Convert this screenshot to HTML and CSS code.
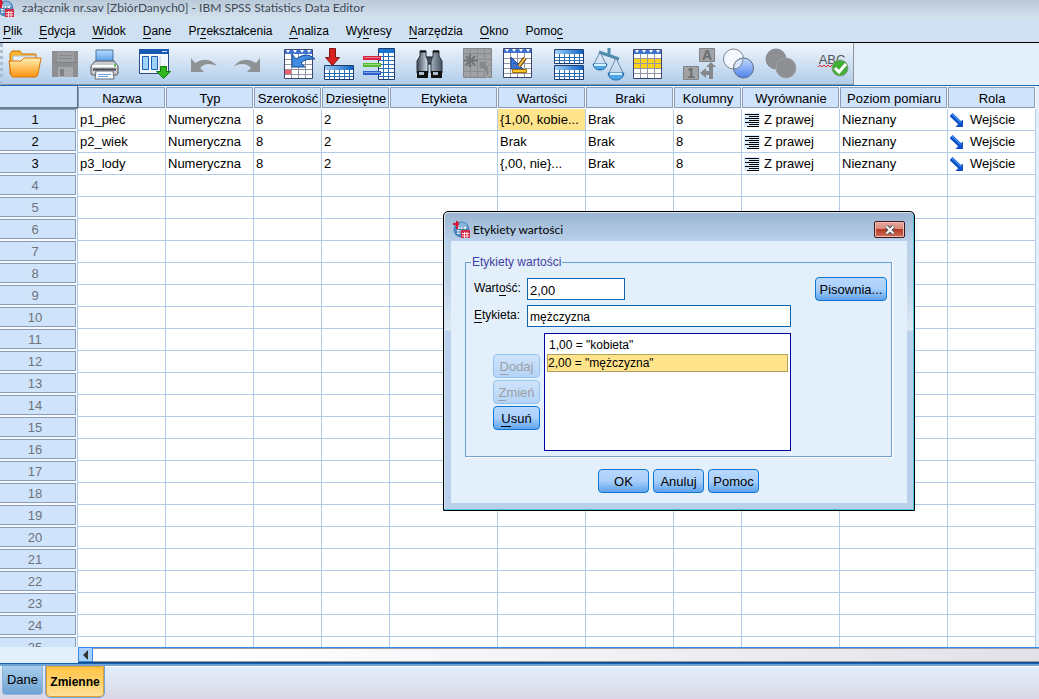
FILE: index.html
```html
<!DOCTYPE html>
<html lang="pl">
<head>
<meta charset="utf-8">
<title>załącznik nr.sav [ZbiórDanych0] - IBM SPSS Statistics Data Editor</title>
<link rel="stylesheet" href="styles.css">
</head>
<body>
<svg class="defs" aria-hidden="true">
  <defs>
    <linearGradient id="blueBar"><stop offset="0" stop-color="#9fd0f8"/><stop offset="1" stop-color="#0d62c4"/></linearGradient>
    <linearGradient id="folder" x2="0" y2="1"><stop offset="0" stop-color="#fff0b0"/><stop offset="1" stop-color="#ff9410"/></linearGradient>
    <linearGradient id="blueDown" x2="0" y2="1"><stop offset="0" stop-color="#b9dcff"/><stop offset="1" stop-color="#3f8fe0"/></linearGradient>
    <linearGradient id="metal"><stop offset="0" stop-color="#3d4650"/><stop offset=".4" stop-color="#c6d3e2"/><stop offset="1" stop-color="#46525f"/></linearGradient>
    <linearGradient id="ball" x2="0" y2="1"><stop offset="0" stop-color="#c4daff"/><stop offset="1" stop-color="#4d82e8"/></linearGradient>
    <symbol id="logo" viewBox="0 0 17 17">
      <circle cx="8.500" cy="8.500" r="8" fill="#4d87bd"/>
      <path d="M5 3Q9 0 13 3L15 7H5z" fill="#8bb7da"/>
      <path d="M4 6h9v7H4z" fill="#e8f1f8"/><path d="M4 8.500h9M4 11h9M7 6v7M10 6v7" stroke="#4f82ad"/>
      <path d="M0 3h6M4 0v8" stroke="#dc1434" stroke-width="2"/>
      <path d="M8 9h9v8H8z" fill="#d12c48"/><path d="M9 12.500h7M9 15h7M11.500 11v6M14 11v6" stroke="#ffdce0"/>
    </symbol>
    <symbol id="right" viewBox="0 0 16 14">
      <path d="M0 0h16v14H0z" fill="#dcebfa"/><path d="M1 1.500h14M5 3.500h10M1 5.500h14M5 7.500h10M1 9.500h14M5 11.500h10M3 13.500h12" stroke="#000"/>
    </symbol>
    <symbol id="role" viewBox="0 0 13 13">
      <path d="M1 1.500L10 10" stroke="#0b4fc9" stroke-width="4"/><path d="M12 6v7H5z" fill="#0b4fc9"/><path d="M2 1l8 8" stroke="#4ea0f5"/>
    </symbol>
  </defs>
</svg>

<div class="app">
  <header class="titlebar">
    <svg class="titlebar-icon" viewBox="3 0 14 17"><use href="#logo" width="17" height="17"/></svg>
    <h1>załącznik nr.sav [ZbiórDanych0] - IBM SPSS Statistics Data Editor</h1>
  </header>

  <nav class="menubar">
    <button><u>P</u>lik</button>
    <button><u>E</u>dycja</button>
    <button><u>W</u>idok</button>
    <button><u>D</u>ane</button>
    <button>Pr<u>z</u>ekształcenia</button>
    <button><u>A</u>naliza</button>
    <button>Wy<u>k</u>resy</button>
    <button><u>N</u>arzędzia</button>
    <button><u>O</u>kno</button>
    <button>Pomo<u>c</u></button>
  </nav>

  <div class="toolbar-row">
  <div class="toolbar">
    <div class="tool-group">
      <button aria-label="Otwórz"><svg viewBox="0 0 34 34"><path d="M2 27V7l2-3h8l2 3h14v20z" fill="#ffb52e" stroke="#c97206"/><path d="M5 9h22l2 9H5z" fill="#e6f1fb" stroke="#a8c0d6"/><path d="M1 14h12l3-3h17l-3 16q-.5 3-3 3H5q-2 0-2-3z" fill="url(#folder)" stroke="#d67508"/></svg></button>
      <button aria-label="Zapisz" disabled><svg viewBox="0 0 34 34"><path d="M4 4h26v26H4z" fill="#8d8f92"/><path d="M9 5h17v10H9z" fill="#9b9da0"/><path d="M11 8.500h13M11 11.500h13" stroke="#88898b"/><path d="M10 20h15v10H10z" fill="#a6a8aa"/><path d="M12 22h4v7h-4z" fill="#7f8183"/><path d="M5 15.500h24" stroke="#7d7f82"/></svg></button>
      <button aria-label="Drukuj"><svg viewBox="0 0 34 34"><path d="M8 3h17v14H8z" fill="url(#blueDown)" stroke="#49709b"/><path d="M7 14h19l4 5v7q0 2-2 2H5q-2 0-2-2v-7z" fill="#c9cbce" stroke="#55585c"/><path d="M4 19h25" stroke="#fff" stroke-width="2"/><path d="M5 22.500h23" stroke="#44474b" stroke-width="2"/><path d="M8 24h17l1 8H7z" fill="#f7faff" stroke="#686d74"/><path d="M10 27.500h13M10 29.500h10" stroke="#6ea2e0"/><path d="M26 18.500h2" stroke="#30b428" stroke-width="2"/></svg></button>
    </div>
    <div class="tool-group">
      <button aria-label="Ostatnie okna"><svg viewBox="0 0 34 34"><path d="M1.500 2.500h29v24h-29z" fill="#f3f8fe" stroke="#2c4a86"/><path d="M1 2h30v5H1z" fill="#1a58b4"/><path d="M24 4.500h5" stroke="#cfe3ff"/><path d="M4.500 9.500h6v13h-6zM13.500 9.500h6v13h-6z" fill="#9fd4f8" stroke="#1c5eb4"/><path d="M22 10v13" stroke="#b9c9dc"/><path d="M22.500 19.500h6v5h4l-7 7-7-7h4z" fill="#2fb820" stroke="#14780d"/></svg></button>
    </div>
    <div class="tool-group tool-group-history">
      <button aria-label="Cofnij" disabled><svg viewBox="0 0 34 34"><path d="M3 11v14h13l-4-4q6-7 17-2Q20 8 7 16z" fill="#8f9295"/></svg></button>
      <button aria-label="Ponów" disabled><svg viewBox="0 0 34 34"><path d="M30 11v14H17l4-4q-6-7-17-2Q13 8 26 16z" fill="#8f9295"/></svg></button>
    </div>
    <div class="tool-group">
      <button aria-label="Idź do obserwacji"><svg viewBox="0 0 34 34"><path d="M1.500 2.500h28v29h-28z" fill="#fff" stroke="#3b456e"/><path d="M2 3h27v4H2z" fill="#3e73cf"/><path d="M3 3h4l-2 3zM10 3h4l-2 3zM17 3h4l-2 3zM24 3h4l-2 3z" fill="#fff"/><path d="M2 12.500h27M2 17.500h27M2 22.500h27M2 27.500h27M8.500 7v24M15.500 7v24M22.500 7v24" stroke="#9195a5"/><path d="M2 23h6v4H2z" fill="#f4606a"/><path d="M9 7v13h13l-4-4q5-5 14-4Q24 4 13 12z" fill="#428be2" stroke="#174b96"/></svg></button>
      <button aria-label="Idź do zmiennej"><svg viewBox="0 0 34 34"><path d="M1.500 18.500h29v14h-29z" fill="#fff" stroke="#203c70"/><path d="M2 19h28v4H2z" fill="url(#blueBar)"/><path d="M2 26.500h28M2 29.500h28M6.500 23v9M11.500 23v9M16.500 23v9M21.500 23v9M26.500 23v9" stroke="#286cb4"/><path d="M6.500 1.500h6v9h4l-7 8-7-8h4z" fill="#d8231c" stroke="#7c1511"/></svg></button>
      <button aria-label="Zmienne"><svg viewBox="0 0 34 34"><path d="M15.500 1.500h16v31h-16z" fill="#fff" stroke="#203c70"/><path d="M16 2h15v4H16z" fill="#1a75d0"/><path d="M16 9.500h15M16 13.500h15M16 17.500h15M16 21.500h15M16 25.500h15M16 29.500h15M20.500 6v26M25.500 6v26" stroke="#286cb4"/><path d="M0 11h18" stroke="#d72342" stroke-width="4"/><path d="M0 18h18" stroke="#55bd2c" stroke-width="4"/><path d="M0 26h18" stroke="#2c62cf" stroke-width="4"/><path d="M1 10.500h16M1 17.500h16M1 25.500h16" stroke="#fff" opacity=".4"/></svg></button>
    </div>
    <div class="tool-group">
      <button aria-label="Znajdź"><svg viewBox="0 0 34 34"><path d="M13 10h7v7h-7z" fill="#44505d" stroke="#111"/><path d="M7 4h6v5l2 5v12H4V14l3-5zM20 4h6v5l3 5v12H18V14l2-5z" fill="url(#metal)" stroke="#2b333d"/><path d="M4 24h11v7H4zM18 24h11v7H18z" fill="#111"/><path d="M6 25h5v3H6zM20 25h5v3h-5z" fill="#aebdcc"/><path d="M7 4.500h6M20 4.500h6" stroke="#111" stroke-width="2"/></svg></button>
    </div>
    <div class="tool-group">
      <button aria-label="Wstaw obserwację" disabled><svg viewBox="0 0 34 34"><path d="M.500 1.500h28v29h-28z" fill="#a0a1a3" stroke="#85878a"/><path d="M0 6.500h28M0 12.500h28M0 18.500h28M0 24.500h28M7.500 1v29M14.500 1v29M21.500 1v29" stroke="#8a8c8f"/><path d="M7 7v13M1 13.500h14M3 9l9 9M12 9l-9 9" stroke="#727477" stroke-width="2"/><path d="M16 14h10l-3 3q6 5 1 14-1-7-5-10l-3 3z" fill="#85878a" stroke="#a9abad"/></svg></button>
      <button aria-label="Wstaw zmienną"><svg viewBox="0 0 34 34"><path d="M.500 1.500h28v29h-28z" fill="#fff" stroke="#3b456e"/><path d="M1 2h27v4H1z" fill="#3e73cf"/><path d="M2 2h4L4 5zM9 2h4l-2 3zM16 2h4l-2 3zM23 2h4l-2 3z" fill="#fff"/><path d="M1 11.500h27M1 16.500h27M1 21.500h27M1 26.500h27M7.500 6v24M14.500 6v24M21.500 6v24" stroke="#9195a5"/><path d="M8 10v12h12zM11 16v3h3z" fill="#3a78e0" fill-rule="evenodd" stroke="#1b4292"/><path d="M22 11l-6 8" stroke="#6f4710" stroke-width="4"/><path d="M22 11l-6 8" stroke="#f4c44c" stroke-width="2"/><path d="M9.500 22.500h14v3h-14z" fill="#ffc52c" stroke="#a66e05"/></svg></button>
    </div>
    <div class="tool-group">
      <button aria-label="Podziel plik"><svg viewBox="0 0 34 34"><path d="M1.500 2.500h29v14h-29zM1.500 18.500h29v14h-29z" fill="#fff" stroke="#203c70"/><path d="M2 3h28v4H2zM2 19h28v4H2z" fill="url(#blueBar)"/><path d="M2 10.500h28M2 13.500h28M2 26.500h28M2 29.500h28M6.500 7v9M11.500 7v9M16.500 7v9M21.500 7v9M26.500 7v9M6.500 23v9M11.500 23v9M16.500 23v9M21.500 23v9M26.500 23v9" stroke="#286cb4"/></svg></button>
      <button aria-label="Ważenie obserwacji"><svg viewBox="0 0 34 34"><path d="M16 1v9M6 5l20 7" stroke="#4d8db0" stroke-width="3"/><path d="M7 5L1 17M7 5l6 12M23 11l-7 15M23 11l7 15" fill="none" stroke="#658ba7"/><path d="M0 17h14q-1 6-7 6t-7-6zM15 26h16q-1 7-8 7t-8-7z" fill="#4aa6e8" stroke="#286ca8"/><path d="M1 18h12M17 27h12" stroke="#d4efff" stroke-width="2"/></svg></button>
      <button aria-label="Wybierz obserwacje"><svg viewBox="0 0 34 34"><path d="M.500 2.500h28v29h-28z" fill="#fff" stroke="#3b456e"/><path d="M1 3h27v4H1z" fill="#3e73cf"/><path d="M2 3h4L4 6zM9 3h4l-2 3zM16 3h4l-2 3zM23 3h4l-2 3z" fill="#fff"/><path d="M1 12h27v9H1z" fill="#fbd31b"/><path d="M1 11.500h27M1 16.500h27M1 21.500h27M1 26.500h27M7.500 7v24M14.500 7v24M21.500 7v24" stroke="#9195a5"/></svg></button>
    </div>
    <div class="tool-group">
      <button aria-label="Etykiety wartości" disabled><svg viewBox="0 0 34 34"><path d="M16.500 1.500h15v13h-15zM.500 19.500h15v13H.500z" fill="#a1a3a5" stroke="#808285"/><text x="24" y="13" class="icon-letter">A</text><text x="8" y="31" class="icon-letter">1</text><path d="M17 26l6-5v3h3v-4h-3l5-5 5 5h-3v12h-4v-4h-3v3z" fill="#85878a"/></svg></button>
      <button aria-label="Użyj zestawów zmiennych"><svg viewBox="0 0 34 34"><circle cx="10.500" cy="12" r="10" fill="#f5f9ff" stroke="#7c8491"/><circle cx="20.500" cy="21" r="10" fill="url(#ball)" stroke="#5d6b83"/><path d="M20.300 11Q10 13 10.700 22 19 22 20.300 11z" fill="#d8e7ff" stroke="#7c8491"/></svg></button>
      <button aria-label="Pokaż wszystkie zmienne" disabled><svg viewBox="0 0 34 34"><circle cx="13" cy="12" r="10" fill="#8d8f92" stroke="#848689"/><circle cx="23" cy="21" r="10" fill="#8d8f92" stroke="#a1a3a6"/></svg></button>
    </div>
    <div class="tool-group">
      <button aria-label="Sprawdź pisownię"><svg viewBox="0 0 34 34"><text x="19" y="17" class="icon-abc">ABC</text><path d="M5 20l2-2 2 2 2-2 2 2 2-2 2 2 2-2" fill="none" stroke="#e02222"/><circle cx="27" cy="21" r="8" fill="#3eae35" stroke="#8a9a8a"/><path d="M22 21l4 4 7-8" fill="none" stroke="#fff" stroke-width="3"/></svg></button>
    </div>
  </div>
  </div>

  <main class="sheet">
    <table>
      <colgroup>
        <col class="c-num"><col class="c-88"><col class="c-88"><col class="c-68"><col class="c-68"><col class="c-108"><col class="c-88"><col class="c-88"><col class="c-68"><col class="c-98"><col class="c-108"><col class="c-88">
      </colgroup>
      <thead>
        <tr><td class="corner"></td><th><span>Nazwa</span></th><th><span>Typ</span></th><th><span>Szerokość</span></th><th><span>Dziesiętne</span></th><th><span>Etykieta</span></th><th><span>Wartości</span></th><th><span>Braki</span></th><th><span>Kolumny</span></th><th><span>Wyrównanie</span></th><th><span>Poziom pomiaru</span></th><th><span>Rola</span></th></tr>
      </thead>
      <tbody id="rows">
        <tr><th><span>1</span></th><td>p1_płeć</td><td>Numeryczna</td><td>8</td><td>2</td><td></td><td class="active">{1,00, kobie...</td><td>Brak</td><td>8</td><td><div class="with-icon"><svg class="align-icon"><use href="#right"/></svg>Z prawej</div></td><td>Nieznany</td><td><div class="with-icon role"><svg class="role-icon"><use href="#role"/></svg>Wejście</div></td></tr>
        <tr><th><span>2</span></th><td>p2_wiek</td><td>Numeryczna</td><td>8</td><td>2</td><td></td><td>Brak</td><td>Brak</td><td>8</td><td><div class="with-icon"><svg class="align-icon"><use href="#right"/></svg>Z prawej</div></td><td>Nieznany</td><td><div class="with-icon role"><svg class="role-icon"><use href="#role"/></svg>Wejście</div></td></tr>
        <tr><th><span>3</span></th><td>p3_lody</td><td>Numeryczna</td><td>8</td><td>2</td><td></td><td>{,00, nie}...</td><td>Brak</td><td>8</td><td><div class="with-icon"><svg class="align-icon"><use href="#right"/></svg>Z prawej</div></td><td>Nieznany</td><td><div class="with-icon role"><svg class="role-icon"><use href="#role"/></svg>Wejście</div></td></tr>
      </tbody>
    </table>
  </main>

  <div class="hscroll">
    <button class="hscroll-left" aria-label="Przewiń w lewo"><svg viewBox="0 0 13 12"><path d="M9 1v10L4 6z" fill="#333"/></svg></button>
    <div class="hscroll-track"></div>
  </div>

  <footer class="tabs">
    <button class="tab">Dane</button>
    <button class="tab tab-active">Zmienne</button>
  </footer>
</div>

<section class="dialog" role="dialog" aria-labelledby="dialog-title">
  <div class="dialog-title">
    <svg class="dialog-icon"><use href="#logo"/></svg>
    <h2 id="dialog-title">Etykiety wartości</h2>
    <button class="close" aria-label="Zamknij"><svg viewBox="0 0 12 10"><path d="M2.500 1.500l7 7M9.500 1.500l-7 7" stroke="#4c5660" stroke-width="4"/><path d="M2.500 1.500l7 7M9.500 1.500l-7 7" stroke="#fff" stroke-width="2"/></svg></button>
  </div>
  <form class="dialog-body">
    <fieldset>
      <legend>Etykiety wartości</legend>
      <div class="field field-value">
        <label for="value">Wart<u>o</u>ść:</label>
        <input id="value" class="input-short" type="text" value="2,00">
        <button type="button" class="btn btn-spelling">Pisownia...</button>
      </div>
      <div class="field field-label">
        <label for="label"><u>E</u>tykieta:</label>
        <input id="label" class="input-long" type="text" value="mężczyzna">
      </div>
      <div class="list-row">
        <div class="list-buttons">
          <button type="button" class="btn" disabled><u>D</u>odaj</button>
          <button type="button" class="btn" disabled><u>Z</u>mień</button>
          <button type="button" class="btn"><u>U</u>suń</button>
        </div>
        <ul class="listbox" role="listbox" aria-label="Etykiety wartości">
          <li role="option">1,00 = "kobieta"</li>
          <li role="option" aria-selected="true" class="selected">2,00 = "mężczyzna"</li>
        </ul>
      </div>
    </fieldset>
    <div class="dialog-actions">
      <button type="button" class="btn">OK</button>
      <button type="button" class="btn">Anuluj</button>
      <button type="button" class="btn">Pomoc</button>
    </div>
  </form>
</section>
<script src="rows.js"></script>
</body>
</html>
```
FILE: styles.css
```css
* { box-sizing: border-box; }
body { margin: 0; font: 13px/16px "Liberation Sans", Arial, sans-serif; color: #000; overflow: hidden; }
button, input { font: inherit; color: inherit; margin: 0; }
button { padding: 0; border: 0; background: none; }
u { text-decoration: none; border-bottom: 1px solid currentColor; }
.defs { position: absolute; width: 0; height: 0; }

.app { display: flex; flex-direction: column; height: 100vh; background: #e3effb; }

.titlebar { flex: none; display: flex; align-items: center; gap: 8px; height: 19px; padding-bottom: 3px; background: linear-gradient(#bac9d7, #d5e3f1); }
.titlebar-icon { width: 14px; height: 17px; }
.titlebar h1 { margin: 0; font: 12px/16px Lato, "Open Sans", sans-serif; color: #3e4954; white-space: nowrap; }

.menubar { flex: none; display: flex; gap: 17px; height: 24px; padding: 5px 3px 0; font-size: 12px; line-height: 14px; background: #cee0f2; border-bottom: 1px solid #000; align-items: flex-start; }

.toolbar-row { flex: none; background: #e3effb; border-bottom: 1px solid #1a68b5; }
.toolbar { display: flex; gap: 10px; width: fit-content; height: 42px; padding: 0 3px 0 2px; background: linear-gradient(#eff5fc, #b1cdea); border-left: 3px dotted #a9bdd3; border-right: 1px solid #8f959b; border-bottom: 1px solid #8f959b; }
.tool-group { display: flex; align-items: center; }
.tool-group-history { gap: 2px; margin-right: 3px; }
.tool-group button { width: 40px; height: 42px; display: grid; place-items: center; }
.tool-group svg { width: 34px; height: 34px; overflow: visible; }
.icon-letter { font: bold 14px "Liberation Sans", Arial, sans-serif; fill: #6b6d70; text-anchor: middle; }
.icon-abc { font: 13px "Liberation Sans", Arial, sans-serif; fill: #555; text-anchor: middle; }

.sheet { flex: 1; min-height: 0; overflow: hidden; }
table { width: 1036px; table-layout: fixed; border-collapse: separate; border-spacing: 0; }
.c-num { width: 78px; }
.c-68 { width: 68px; }
.c-88 { width: 88px; }
.c-98 { width: 98px; }
.c-108 { width: 108px; }
th, td { padding: 0; font-weight: normal; white-space: nowrap; }
thead tr { height: 23px; }
thead th { padding: 1px 1px 1px 0; background: #f5faff; }
thead span { display: block; height: 21px; padding-left: 1px; line-height: 21px; text-align: center; background: #cfe3fb; border: 1px solid #8a9cb8; }
.corner { background: #cfe3fb; border-right: 1px solid #5c6b80; border-bottom: 2px solid #6d7c91; }
tbody tr { height: 22px; }
tbody td { height: 22px; padding: 0 2px; overflow: hidden; background: #fff; border-right: 1px solid #b0cce8; border-bottom: 1px solid #b0cce8; }
tbody th { padding: 0 1px 2px 0; border-right: 1px solid #b0cce8; background: #f5faff; }
tbody th span { display: block; height: 20px; padding-right: 5px; line-height: 19px; background: #cfe3fb; border: solid #8a9cb8; border-width: 1px 1px 1px 0; }
.empty th { color: #6d737b; }
tbody .active { background: #ffe48c; }
.with-icon { display: flex; align-items: center; gap: 4px; }
.with-icon.role { gap: 6px; }
.align-icon { width: 16px; height: 14px; }
.role-icon { width: 14px; height: 14px; }

.hscroll { flex: none; display: flex; height: 16px; margin-left: 78px; border-top: 1px solid #2f8cea; border-bottom: 1px solid #174a86; }
.hscroll-left { width: 15px; background: #abd0f8; border: 1px solid #2f8cea; border-top: 0; }
.hscroll-left svg { display: block; width: 13px; height: 12px; }
.hscroll-track { flex: 1; border: solid #9a9ca4; border-width: 1px 0; background: linear-gradient(90deg, #fff, #fff 12%, #e2e1e8 100%); }

.tabs { flex: none; display: flex; gap: 3px; align-items: flex-start; height: 36px; padding-left: 2px; border-top: 1px solid #1462b0; box-shadow: inset 0 2px #6fa3d4, inset 0 3px #fff; padding-top: 2px; background: linear-gradient(#e3f0fc, #dad8e6); }
.tab { width: 41px; height: 29px; background: linear-gradient(#a8cdec, #6fa3d4); border: 1px solid #8ab4dc; border-width: 0 1px 1px; border-radius: 0 0 4px 4px; }
.tab-active { width: 58px; height: 31px; font-size: 12px; font-weight: bold; background: linear-gradient(#ffc445, #ffdf96); border: 1px solid #d9a136; outline: 1px solid #79a5d6; }

.dialog { position: absolute; left: 443px; top: 211px; width: 472px; padding: 0 7px 7px; background: linear-gradient(#9ab4d1, #b9d1ea 30px, #bfd4e9 70px, #dbe8f5 118px, #b9d1ea 119px); border: 1px solid #000; border-radius: 5px 5px 0 0; box-shadow: inset -1px -1px #4cc5dc, inset 1px 1px #d6e4f1; }
.dialog-title { display: flex; align-items: center; gap: 3px; height: 29px; padding: 6px 2px 0; }
.dialog-icon { width: 17px; height: 17px; }
.dialog-title h2 { flex: 1; margin: 0; font: 12px/16px Lato, "Open Sans", sans-serif; }
.close { width: 31px; height: 17px; display: grid; place-items: center; border: 1px solid #47141c; border-radius: 2px; background: linear-gradient(#e5a99e, #d88a7c 45%, #b43a22 50%, #d27057); box-shadow: inset 0 0 0 1px #eebdb4; }
.close svg { width: 12px; height: 10px; }

.dialog-body { padding: 12px 15px 10px 14px; background: #e3effb; font-size: 12px; }
fieldset { min-width: 0; margin: 0; padding: 6px 4px 5px 8px; border: 1px solid #6d9fd0; box-shadow: 1px 1px #fff; }
legend { margin-left: -3px; padding: 0 1px; line-height: 18px; color: #3f3f9f; }
.field { display: flex; align-items: center; }
.field label { width: 53px; padding-bottom: 3px; line-height: 14px; }
.field input { height: 22px; padding: 2px 2px 0; background: #fff; border: 1px solid #0f65b4; border-radius: 0; }
.field-label { margin: 4px 0 6px; }
.field .input-short { width: 98px; font-size: 13px; }
.input-long { width: 264px; }
.btn { height: 24px; line-height: 13px; font-size: 13px; background: linear-gradient(#b9d8fd, #a9cffb 50%, #5ea3ec); border: 1px solid #0c78d6; border-radius: 4px; }
.btn:disabled { color: #9b9fa5; background: linear-gradient(#d0e4fb, #b4d4f6); border-color: #94c3ef; }
.btn-spelling { width: 72px; margin-left: auto; }
.list-row { display: flex; gap: 4px; padding-left: 19px; }
.list-buttons { display: flex; flex-direction: column; gap: 2px; width: 47px; padding-top: 21px; }
.listbox { width: 247px; height: 118px; margin: 0; padding: 2px; list-style: none; background: #fff; border: 1px solid #0000a0; }
.listbox li { height: 18px; padding: 0 1px; line-height: 16px; border: 1px solid transparent; }
.listbox .selected { padding: 0; background: #ffe48c; border-color: #b0a060; }
.dialog-actions { display: flex; justify-content: center; gap: 4px; margin-top: 12px; }
.dialog-actions .btn { width: 51px; }
```
FILE: rows.js
```js
// Fill the variable view with numbered empty rows below the defined variables.
const body = document.getElementById("rows");
for (let n = 4; n <= 25; n++) {
  const row = body.insertRow();
  row.className = "empty";
  row.innerHTML = `<th><span>${n}</span></th>` + "<td></td>".repeat(11);
}
```
